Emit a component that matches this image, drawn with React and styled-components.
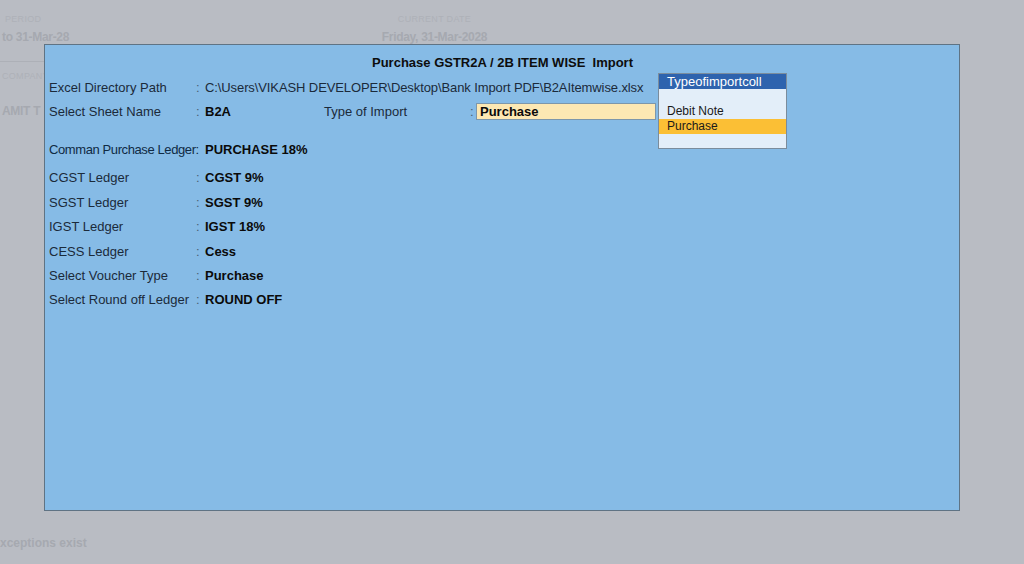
import React from "react";
import styled, { createGlobalStyle } from "styled-components";

const GlobalStyle = createGlobalStyle`
  html, body {
    margin: 0;
    padding: 0;
    background: #b9bcc3;
    font-family: "Liberation Sans", Arial, sans-serif;
  }
`;

const Screen = styled.div`
  position: relative;
  width: 1024px;
  height: 564px;
  overflow: hidden;
  background: #b9bcc3;
`;

// faint screen underneath the import window
const Header = styled.div`
  display: flex;
  padding-top: 14px;
`;
const HeadBlock = styled.div`
  width: ${(p) => p.width}px;
  padding-left: ${(p) => p.indent || 0}px;
  display: flex;
  flex-direction: column;
  align-items: ${(p) => (p.center ? "center" : "flex-start")};
`;
const Caption = styled.div`
  font-size: 9px;
  color: #aeb1b8;
  height: 12px;
  letter-spacing: 0.3px;
`;
const Faint = styled.div`
  font-size: 12px;
  font-weight: bold;
  color: #a6a9b0;
  height: 16px;
  margin-top: 4px;
  white-space: nowrap;
  letter-spacing: -0.3px;
`;
const Rule = styled.div`
  width: 44px;
  height: 1px;
  background: #adb0b7;
  margin-top: 15px;
`;
const Company = styled.div`
  padding: 9px 0 0 2px;
  display: flex;
  flex-direction: column;
  gap: 17px;
`;
const Footer = styled.div`
  position: absolute;
  left: 0;
  bottom: 14px;
  font-size: 12px;
  font-weight: bold;
  color: #a6a9b0;
`;

// import window
const Panel = styled.div`
  position: absolute;
  left: 44px;
  top: 44px;
  width: 916px;
  height: 467px;
  background: #86bbe6;
  border: 1px solid #5f7384;
  box-sizing: border-box;
  padding: 10px 0 0 4px;
  color: #1b2a3a;
  font-size: 13px;
`;
const Title = styled.div`
  text-align: center;
  font-weight: bold;
  color: #0d0d0d;
  height: 16px;
  line-height: 16px;
  margin-bottom: 4px;
  padding-right: 3px;
`;
const Row = styled.div`
  display: flex;
  align-items: center;
  height: ${(p) => p.h || 24.4}px;
  margin-top: ${(p) => p.gap || 0}px;
  white-space: nowrap;
`;
const Label = styled.div`
  width: ${(p) => p.width || 147}px;
  letter-spacing: ${(p) => p.tight || 0}px;
`;
const Colon = styled.div`
  width: 9px;
  color: #4b6176;
`;
const Value = styled.div`
  width: ${(p) => (p.width ? p.width + "px" : "auto")};
  font-weight: ${(p) => (p.plain ? "normal" : "bold")};
  color: ${(p) => (p.plain ? "#1b2a3a" : "#0a0a0a")};
  letter-spacing: ${(p) => (p.plain ? "-0.1px" : "0")};
`;
const Input = styled.div`
  width: 175px;
  height: 15px;
  line-height: 15px;
  background: #fde8b3;
  border: 1px solid #7d97ab;
  padding-left: 3px;
  font-weight: bold;
  color: #0a0a0a;
  margin-left: -3px;
`;

// list popup
const Popup = styled.div`
  position: absolute;
  left: 658px;
  top: 73px;
  width: 129px;
  height: 76px;
  box-sizing: border-box;
  background: #e3eef9;
  border: 1px solid #7b8c9c;
  font-size: 12px;
  color: #1a1a1a;
`;
const PopupHead = styled.div`
  background: #2e63ae;
  color: #ffffff;
  height: 15px;
  line-height: 15px;
  padding-left: 8px;
  font-size: 13px;
`;
const Item = styled.div`
  height: 15px;
  line-height: 15px;
  padding-left: 8px;
  background: ${(p) => (p.active ? "#fbbf35" : "transparent")};
`;

const ledgers = [
  ["CGST Ledger", "CGST 9%"],
  ["SGST Ledger", "SGST 9%"],
  ["IGST Ledger", "IGST 18%"],
  ["CESS Ledger", "Cess"],
  ["Select Voucher Type", "Purchase"],
  ["Select Round off Ledger", "ROUND OFF"],
];

export default function App() {
  return (
    <Screen>
      <GlobalStyle />
      <Header>
        <HeadBlock width={382} indent={5}>
          <Caption>PERIOD</Caption>
          <Faint style={{ marginLeft: -3 }}>to 31-Mar-28</Faint>
        </HeadBlock>
        <HeadBlock width={95} center>
          <Caption>CURRENT DATE</Caption>
          <Faint>Friday, 31-Mar-2028</Faint>
        </HeadBlock>
      </Header>
      <Rule />
      <Company>
        <Caption>COMPANY NAME</Caption>
        <Faint>AMIT T</Faint>
      </Company>
      <Footer>xceptions exist</Footer>

      <Panel>
        <Title>Purchase GSTR2A / 2B ITEM WISE&nbsp; Import</Title>
        <Row>
          <Label>Excel Directory Path</Label>
          <Colon>:</Colon>
          <Value plain>
            C:\Users\VIKASH DEVELOPER\Desktop\Bank Import PDF\B2AItemwise.xlsx
          </Value>
        </Row>
        <Row>
          <Label>Select Sheet Name</Label>
          <Colon>:</Colon>
          <Value width={119}>B2A</Value>
          <Label width={146}>Type of Import</Label>
          <Colon>:</Colon>
          <Input>Purchase</Input>
        </Row>
        <Row gap={14}>
          <Label width={156} tight={-0.4} style={{ color: "#0f2a44" }}>
            Comman Purchase Ledger:
          </Label>
          <Value>PURCHASE 18%</Value>
        </Row>
        <Row gap={3.6}>
          <Label>{ledgers[0][0]}</Label>
          <Colon>:</Colon>
          <Value>{ledgers[0][1]}</Value>
        </Row>
        {ledgers.slice(1).map(([label, value]) => (
          <Row key={label}>
            <Label>{label}</Label>
            <Colon>:</Colon>
            <Value>{value}</Value>
          </Row>
        ))}
      </Panel>

      <Popup>
        <PopupHead>Typeofimportcoll</PopupHead>
        <Item />
        <Item>Debit Note</Item>
        <Item active>Purchase</Item>
      </Popup>
    </Screen>
  );
}
